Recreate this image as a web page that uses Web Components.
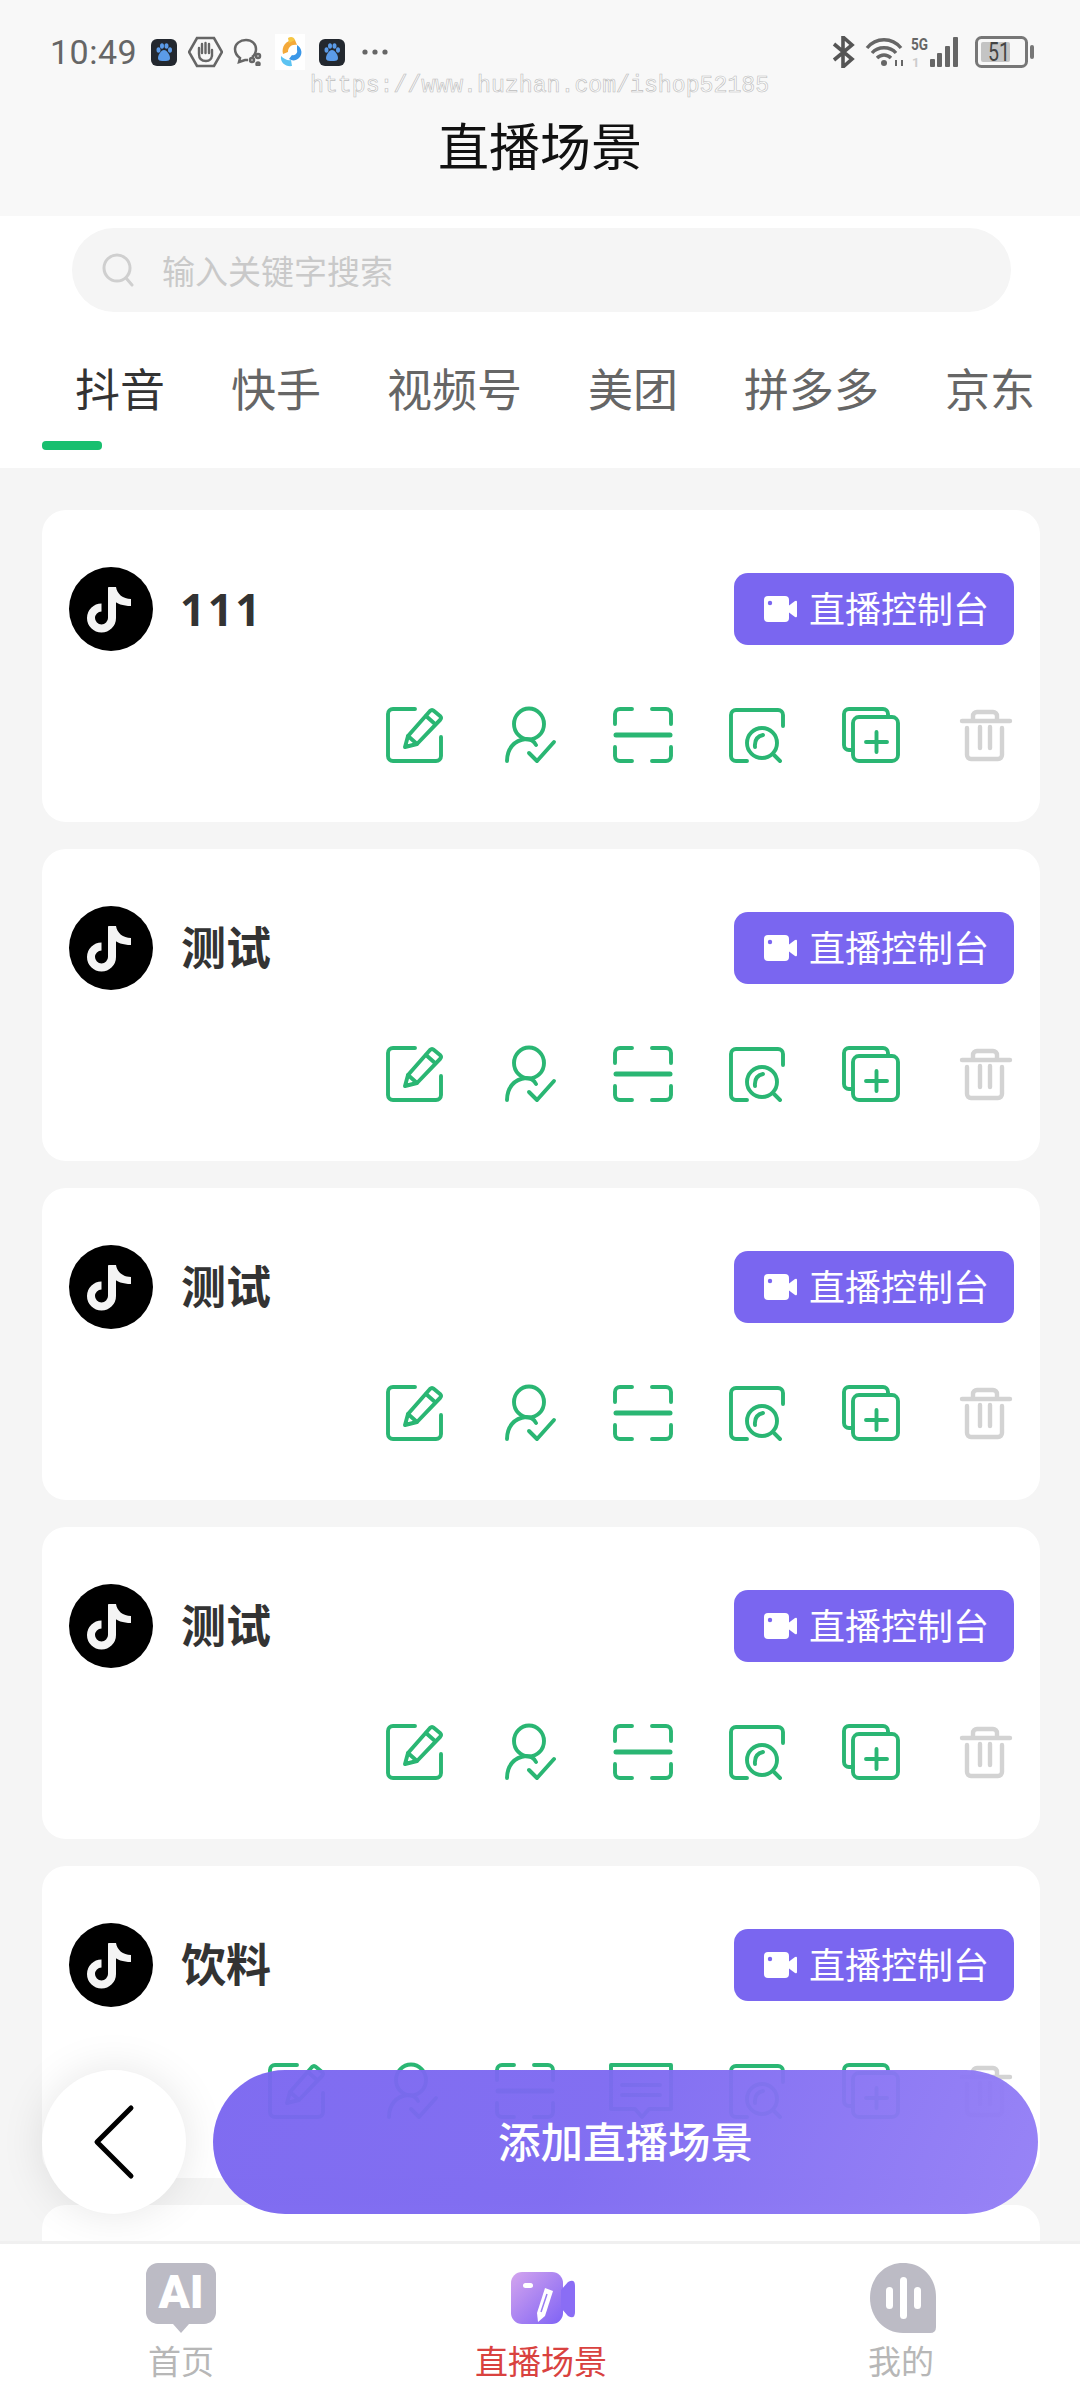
<!DOCTYPE html>
<html lang="zh">
<head>
<meta charset="utf-8">
<title>直播场景</title>
<style>
  html, body { margin: 0; padding: 0; }
  body {
    position: relative;
    width: 1080px;
    height: 2400px;
    overflow: hidden;
    background: #f5f5f5;
    font-family: "Noto Sans CJK SC", "Noto Sans", sans-serif;
  }
  #app { display: flex; flex-direction: column; height: 2400px; }
</style>
</head>
<body>
<div id="app">
  <app-header title="直播场景"></app-header>
  <search-box placeholder="输入关键字搜索"></search-box>
  <tab-strip active="0" tabs="抖音,快手,视频号,美团,拼多多,京东"></tab-strip>
  <scene-list>
    <scene-card name="111"></scene-card>
    <scene-card name="测试"></scene-card>
    <scene-card name="测试"></scene-card>
    <scene-card name="测试"></scene-card>
    <scene-card name="饮料" comment></scene-card>
    <scene-card blank></scene-card>
    <fab-bar slot="overlay" label="添加直播场景"></fab-bar>
  </scene-list>
  <bottom-nav></bottom-nav>
</div>
<water-mark text="https://www.huzhan.com/ishop52185"></water-mark>

<script>
// action icons, all drawn on a 60x56 box (comment is 64 wide)
const ICONS = {
  edit: `<path d="M30 2H8a5 5 0 0 0-5 5v42a5 5 0 0 0 5 5h43a5 5 0 0 0 5-5V30"/>
    <path d="M20 40l3-11L45 4q2-2 4 0l6 5q2 2 0 4L32 37z"/><path d="M23 29l9 8M41 9l9 8"/>`,
  person: `<ellipse cx="30" cy="17" rx="15" ry="15.500"/><path d="M8 54c0-12 7-21 19-22 4 0 8 2 10 6"/><path d="M30 46l8 8 17-19"/>`,
  scan: `<path d="M19 2H7a5 5 0 0 0-5 5v10M39 2h14a5 5 0 0 1 5 5v10M2 40v9a5 5 0 0 0 5 5h12M58 40v9a5 5 0 0 1-5 5H39"/>
    <path d="M3 28h54" stroke-width="5"/>`,
  comment: `<path d="M2 2H62V46H40L33 54 26 46H2Z"/><path d="M13 22H51M13 32H51"/>`,
  review: `<path d="M56 19V8a5 5 0 0 0-5-5H9a5 5 0 0 0-5 5v41a5 5 0 0 0 5 5h11"/>
    <circle cx="35" cy="36" r="15"/><path d="M47 48l6 6M28 40q-1-10 8-12"/>`,
  copy: `<path d="M47 9V7a5 5 0 0 0-5-5H8a5 5 0 0 0-5 5v31a5 5 0 0 0 5 5h4"/>
    <rect x="12" y="10" width="45" height="44" rx="6"/><path d="M25 35h21M35.500 25v20"/>`,
  trash: `<path d="M7 14h48M18 13V9a4 4 0 0 1 4-4h16a4 4 0 0 1 4 4v4"/>
    <path d="M12 21v27a4 4 0 0 0 4 4h27a4 4 0 0 0 4-4V21M25 20v21M35 20v21"/>`,
};

class AppHeader extends HTMLElement {
  connectedCallback() {
    this.attachShadow({ mode: 'open' });
    this.shadowRoot.innerHTML = `
      <style>
        :host { display: block; height: 216px; background: #f8f8f8; color: #111; }
        h1 { margin: 0; height: 80px; text-align: center;
             font: 400 51px/80px "Noto Sans CJK SC", sans-serif; }
      </style>
      <status-bar></status-bar>
      <h1>${this.getAttribute('title')}</h1>
    `;
  }
}

class StatusBar extends HTMLElement {
  connectedCallback() {
    const paw = (ml) => `<svg style="margin-left:${ml}px" width="26" height="27" viewBox="0 0 26 27">
      <rect width="26" height="27" rx="6" fill="#23282f"/>
      <g fill="#5b9be8"><ellipse cx="7.500" cy="11" rx="2" ry="2.800"/><ellipse cx="11" cy="7" rx="2" ry="2.800"/>
      <ellipse cx="15.500" cy="7" rx="2" ry="2.800"/><ellipse cx="19" cy="11" rx="2" ry="2.800"/>
      <path d="M13 11c3 0 6 5 6 8s-3 3-6 3-6 0-6-3 3-8 6-8z"/></g></svg>`;
    this.attachShadow({ mode: 'open' });
    this.shadowRoot.innerHTML = `
      <style>
        :host { display: flex; align-items: center; height: 104px; padding: 0 45px 0 50px; box-sizing: border-box;
                color: #666; font-family: Roboto, sans-serif; }
        .time { font-size: 34px; letter-spacing: .5px; }
        svg { display: block; flex: none; }
        .right { margin-left: auto; }
      </style>
      <span class="time">10:49</span>
      ${paw(14)}
      <svg style="margin-left:11px" width="35" height="32" viewBox="0 0 35 32" fill="none" stroke="#666" stroke-width="2.600">
        <path d="M9 2h17l8 14-8 14H9L1 16z"/>
        <path d="M11 18v-6M14 17V8M17.500 17V7M21 17V8M24 20v-6M11 18c0 5 3 7 7 7s6-3 6-6" stroke-width="2.400" stroke-linecap="round"/>
      </svg>
      <svg style="margin-left:9px" width="30" height="28" viewBox="0 0 30 28" fill="none" stroke="#666" stroke-width="2.500">
        <path d="M20 19c3-2 4-5 4-8 0-5-4-9-10-9S3 6 3 11c0 4 2 7 5 9l-1 4 6-2h3"/>
        <circle cx="26" cy="18" r="2"/><circle cx="20" cy="22" r="2"/><circle cx="26" cy="26" r="1.500"/>
      </svg>
      <svg style="margin-left:13px" width="30" height="36" viewBox="0 0 30 36">
        <rect width="30" height="36" fill="#fff"/>
        <path d="M8 20c-2-8 4-15 12-14l2 5c-6-1-9 3-9 7z" fill="#f4a93a"/>
        <path d="M13 4c3-2 6-1 7 2l-6 3z" fill="#f6c644"/>
        <path d="M22 11c5 3 6 9 2 13-3 3-7 3-10 1l3-4c3 1 6-2 5-5z" fill="#3a97e8"/>
        <path d="M6 22c3 3 7 5 10 4l1 6c-6 1-12-3-11-10z" fill="#5cc3f2"/>
      </svg>
      ${paw(14)}
      <svg style="margin-left:17px" width="26" height="6" viewBox="0 0 26 6" fill="#666">
        <circle cx="3" cy="3" r="2.600"/><circle cx="13" cy="3" r="2.600"/><circle cx="23" cy="3" r="2.600"/>
      </svg>
      <svg class="right" width="23" height="32" viewBox="0 0 23 32" fill="none" stroke="#555" stroke-width="3.600">
        <path d="M2 8l18 15-9 8V1l9 8L2 24"/>
      </svg>
      <svg style="margin-left:10px" width="40" height="30" viewBox="0 0 40 30" fill="none" stroke="#666" stroke-width="3.400">
        <path d="M2 11c9-11 25-11 34 0M7 16c6-7 18-7 24 0M12 21c4-4 10-4 14 0"/>
        <circle cx="19" cy="26" r="3" fill="#666" stroke="none"/>
        <path d="M31 23v6M37 23v6" stroke-width="2"/>
      </svg>
      <svg style="margin-left:6px" width="49" height="44" viewBox="0 -6 49 44">
        <text x="0" y="14" font-family="Roboto, sans-serif" font-size="17" font-weight="700" fill="#666" textLength="17" lengthAdjust="spacingAndGlyphs">5G</text>
        <text x="1" y="31" font-family="Roboto, sans-serif" font-size="13" font-weight="700" fill="#ccc">1</text>
        <g fill="#666"><rect x="19" y="23" width="5" height="8" rx="1"/><rect x="26" y="17" width="5" height="14" rx="1"/>
        <rect x="34" y="10" width="5" height="21" rx="1"/><rect x="42" y="1" width="5" height="30" rx="1"/></g>
      </svg>
      <svg style="margin-left:15px" width="60" height="32" viewBox="0 0 60 32">
        <rect x="1.500" y="1.500" width="50" height="29" rx="5" fill="none" stroke="#777" stroke-width="3"/>
        <rect x="6" y="6" width="29" height="20" rx="2" fill="#c4c4c4"/>
        <rect x="55" y="9" width="4" height="14" rx="2" fill="#777"/>
        <text x="13" y="25" font-family="Roboto, sans-serif" font-size="25" fill="#444" textLength="22" lengthAdjust="spacingAndGlyphs">51</text>
      </svg>
    `;
  }
}

class SearchBox extends HTMLElement {
  connectedCallback() {
    this.attachShadow({ mode: 'open' });
    this.shadowRoot.innerHTML = `
      <style>
        :host { display: block; background: #fff; padding: 12px 69px 0 72px; }
        .box { display: flex; align-items: center; gap: 28px; height: 84px; padding-left: 30px;
               border-radius: 42px; background: #f5f5f5; color: #c9c9c9; font-size: 33px; }
        svg { display: block; }
      </style>
      <div class="box">
        <svg width="32" height="34" viewBox="0 0 32 34" fill="none" stroke="#cfcfcf" stroke-width="3" stroke-linecap="round">
          <circle cx="15" cy="15" r="13"/><path d="M24 25l6 7"/>
        </svg>
        <span>${this.getAttribute('placeholder')}</span>
      </div>
    `;
  }
}

class TabStrip extends HTMLElement {
  connectedCallback() {
    const active = parseInt(this.getAttribute('active')) || 0;
    const tabs = this.getAttribute('tabs').split(',');
    const tabsHtml = tabs
      .map((t, i) => `<span class="tab ${i === active ? 'tab--active' : ''}">${t}</span>`)
      .join('');
    this.attachShadow({ mode: 'open' });
    this.shadowRoot.innerHTML = `
      <style>
        :host { display: block; background: #fff; height: 156px; padding-top: 46px; box-sizing: border-box; }
        .row { display: flex; gap: 66px; padding-left: 75px; height: 60px; white-space: nowrap; }
        .tab { font-size: 45px; line-height: 60px; color: #666; }
        .tab--active { color: #333; }
        .bar { width: 60px; height: 9px; margin: 23px 0 0 42px; border-radius: 4px; background: #18bf6f; }
      </style>
      <div class="row">${tabsHtml}</div>
      <div class="bar"></div>
    `;
  }
}

class SceneList extends HTMLElement {
  connectedCallback() {
    this.attachShadow({ mode: 'open' });
    this.shadowRoot.innerHTML = `
      <style>
        :host { display: block; position: relative; flex: 1; min-height: 0; overflow: hidden; }
        .items { display: flex; flex-direction: column; gap: 27px; padding: 42px 40px 0 42px; }
      </style>
      <div class="items"><slot></slot></div>
      <slot name="overlay"></slot>
    `;
  }
}

class SceneCard extends HTMLElement {
  connectedCallback() {
    this.attachShadow({ mode: 'open' });
    const cardCss = `
      :host { display: block; flex: none; height: 312px; box-sizing: border-box; padding: 57px 25px 0 27px;
              border-radius: 24px; background: #fff; color: #333; }`;
    // the last card only peeks out above the nav bar, nothing of it is readable
    if (this.hasAttribute('blank')) {
      this.shadowRoot.innerHTML = `<style>${cardCss}</style>`;
      return;
    }
    const keys = this.hasAttribute('comment')
      ? ['edit', 'person', 'scan', 'comment', 'review', 'copy', 'trash']
      : ['edit', 'person', 'scan', 'review', 'copy', 'trash'];
    const actionsHtml = keys
      .map((k) => {
        const w = k === 'comment' ? 64 : 60;
        return `<svg class="${k}" width="${w}" height="56" viewBox="0 0 ${w} 56">${ICONS[k]}</svg>`;
      })
      .join('');
    this.shadowRoot.innerHTML = `
      <style>
        ${cardCss}
        .head { display: flex; align-items: center; height: 84px; }
        .name { margin-left: 28px; padding-bottom: 5px; font-size: 45px; font-weight: 700; }
        .name--num { font-family: "Open Sans", sans-serif; font-size: 44px; letter-spacing: 2.500px; margin-left: 27px; padding-bottom: 0; }
        .live { display: flex; align-items: center; gap: 12px; margin: 0 1px 0 auto; width: 280px; height: 72px;
                box-sizing: border-box; padding-left: 30px; border-radius: 14px; background: #7a66f0;
                color: #fff; font-size: 36px; }
        .live span { padding-bottom: 5px; }
        .actions { display: flex; justify-content: flex-end; gap: 54px; margin-top: 56px; }
        .actions svg { display: block; overflow: visible; fill: none; stroke: #2ab673; stroke-width: 3.900;
                       stroke-linecap: round; stroke-linejoin: round; }
        .actions svg.trash { stroke: #d3d3d3; stroke-width: 4.400; }
      </style>
      <div class="head">
        <svg width="84" height="84" viewBox="0 0 84 84">
          <circle cx="42" cy="42" r="42" fill="#000"/>
          <g fill="none" stroke="#f4f4f4" stroke-width="8">
            <path d="M43 21v30a10.500 10.500 0 1 1-10.500-10.500"/>
          </g>
          <path d="M39 20h8c1 7 7 12 15 12v7c-8 0-14-2-19-7z" fill="#f4f4f4"/>
        </svg>
        <span class="name ${/^\d+$/.test(this.getAttribute('name')) ? 'name--num' : ''}">${this.getAttribute('name')}</span>
        <div class="live">
          <svg width="33" height="26" viewBox="0 0 33 26">
            <rect width="25" height="26" rx="4" fill="#fff"/>
            <path d="M23 11l8-6q2-1 2 1v14q0 2-2 1l-8-6z" fill="#fff"/>
            <circle cx="6" cy="7" r="2.200" fill="#7a66f0"/>
          </svg>
          <span>直播控制台</span>
        </div>
      </div>
      <div class="actions">${actionsHtml}</div>
    `;
  }
}

class FabBar extends HTMLElement {
  connectedCallback() {
    this.attachShadow({ mode: 'open' });
    this.shadowRoot.innerHTML = `
      <style>
        :host { display: flex; gap: 27px; position: absolute; left: 42px; right: 42px; bottom: 27px; height: 144px; }
        .back { flex: none; width: 144px; height: 144px; border-radius: 50%; background: #fff;
                box-shadow: 0 0 44px rgba(0,0,0,.1); }
        .back svg { display: block; }
        .add { flex: 1; display: flex; align-items: center; justify-content: center; border-radius: 72px;
               background: linear-gradient(115deg, rgba(122,102,240,.96) 0%, rgba(125,105,241,.96) 45%, rgba(148,127,246,.96) 100%);
               color: #fff; font-size: 42.500px; font-weight: 500; }
        .add span { padding-bottom: 5px; }
      </style>
      <div class="back">
        <svg width="144" height="144" viewBox="0 0 144 144" fill="none" stroke="#000" stroke-width="5" stroke-linecap="round" stroke-linejoin="round">
          <path d="M89 38L55 72l34 34"/>
        </svg>
      </div>
      <div class="add"><span>${this.getAttribute('label')}</span></div>
    `;
  }
}

class BottomNav extends HTMLElement {
  connectedCallback() {
    this.attachShadow({ mode: 'open' });
    this.shadowRoot.innerHTML = `
      <style>
        :host { display: grid; grid-template-columns: 360px 360px 360px; flex: none; height: 159px; box-sizing: border-box;
                border-top: 3px solid #f0f0f0; background: #fff; }
        .item { display: flex; flex-direction: column; align-items: center; color: #b7b7b7; font-size: 33px; }
        .item--active { color: #d9423f; }
        .ico { height: 70px; margin-top: 19px; display: flex; align-items: center; }
        .ico svg { display: block; }
        .label { line-height: 44px; margin: 5px 0 0 2px; }
      </style>
      <div class="item">
        <div class="ico" style="margin-left:2px">
          <svg width="70" height="70" viewBox="0 0 70 70">
            <path d="M12 0h46a12 12 0 0 1 12 12v38a12 12 0 0 1-12 11H43l-8 9-8-9H12A12 12 0 0 1 0 50V12A12 12 0 0 1 12 0z" fill="#bcbbc5"/>
            <text x="35" y="45" text-anchor="middle" font-family="Roboto, sans-serif" font-size="46" font-weight="900" fill="#fff">AI</text>
          </svg>
        </div>
        <span class="label">首页</span>
      </div>
      <div class="item item--active">
        <div class="ico" style="margin-left:6px">
          <svg width="64" height="52" viewBox="0 0 64 52">
            <defs><linearGradient id="g" x1="0" y1="0" x2="1" y2="1"><stop offset="0" stop-color="#d4a5ee"/><stop offset="1" stop-color="#7f63f5"/></linearGradient></defs>
            <rect width="52" height="52" rx="11" fill="url(#g)"/>
            <path d="M50 18l7-8q7-4 7 4v26q0 8-7 4l-7-8z" fill="#8a6df5"/>
            <rect x="12" y="11" width="10" height="5" rx="2.500" fill="#fff"/>
            <path d="M34 16l8 3-8 25-7 6-1-9z" fill="#fff"/>
            <path d="M36 22l-6 18" stroke="#9a7df2" stroke-width="1.500"/>
          </svg>
        </div>
        <span class="label">直播场景</span>
      </div>
      <div class="item">
        <div class="ico" style="margin-left:5px">
          <svg width="66" height="70" viewBox="0 0 66 70">
            <path d="M33 0c20 0 33 15 33 34v30q0 6-6 6H33C14 70 0 54 0 35S13 0 33 0z" fill="#bcbbc5"/>
            <g fill="#fff"><rect x="16" y="24" width="7" height="22" rx="3.500"/><rect x="30" y="14" width="7" height="42" rx="3.500"/><rect x="44" y="24" width="7" height="22" rx="3.500"/></g>
          </svg>
        </div>
        <span class="label">我的</span>
      </div>
    `;
  }
}

class WaterMark extends HTMLElement {
  connectedCallback() {
    this.attachShadow({ mode: 'open' });
    this.shadowRoot.innerHTML = `
      <style>
        :host { display: block; position: absolute; left: 310px; top: 71px; font: 23.200px/30px "Liberation Mono", monospace;
                color: rgba(255,255,255,.5); -webkit-text-stroke: .6px #bcbcbc; white-space: nowrap; }
      </style>
      ${this.getAttribute('text')}
    `;
  }
}

customElements.define('app-header', AppHeader);
customElements.define('status-bar', StatusBar);
customElements.define('search-box', SearchBox);
customElements.define('tab-strip', TabStrip);
customElements.define('scene-list', SceneList);
customElements.define('scene-card', SceneCard);
customElements.define('fab-bar', FabBar);
customElements.define('bottom-nav', BottomNav);
customElements.define('water-mark', WaterMark);
</script>
</body>
</html>
